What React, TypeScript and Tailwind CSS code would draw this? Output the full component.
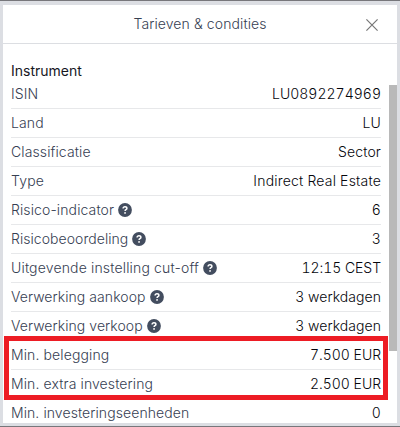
type Item = { label: string; value: string; help?: boolean; labelStyle?: string; valueStyle?: string };

const items: Item[] = [
  { label: 'ISIN', value: 'LU0892274969', valueStyle: 'tracking-[0.02px]' },
  { label: 'Land', value: 'LU' },
  { label: 'Classificatie', value: 'Sector' },
  { label: 'Type', value: 'Indirect Real Estate', labelStyle: 'tracking-[0.2px]', valueStyle: 'tracking-[0.2px]' },
  { label: 'Risico-indicator', value: '6', help: true },
  { label: 'Risicobeoordeling', value: '3', help: true, labelStyle: 'tracking-[0.05px]' },
  { label: 'Uitgevende instelling cut-off', value: '12:15 CEST', help: true, labelStyle: 'tracking-[0.16px]', valueStyle: 'tracking-[-0.04px]' },
  { label: 'Verwerking aankoop', value: '3 werkdagen', help: true, labelStyle: 'tracking-[0.06px]', valueStyle: 'tracking-[0.05px]' },
  { label: 'Verwerking verkoop', value: '3 werkdagen', help: true, labelStyle: 'tracking-[0.06px]', valueStyle: 'tracking-[0.05px]' },
  { label: 'Min. belegging', value: '7.500 EUR', valueStyle: 'tracking-[-0.04px]' },
  { label: 'Min. extra investering', value: '2.500 EUR', valueStyle: 'tracking-[-0.04px]' },
  { label: 'Min. investeringseenheden', value: '0', labelStyle: 'tracking-[0.08px]' },
];

function HelpIcon() {
  return (
    <svg className="ml-1 size-3.5 shrink-0" viewBox="0 0 14 14" fill="none">
      <circle cx="7" cy="7" r="6.9" fill="#434d5f" />
      <path d="M5.1 5.5C5.1 4.3 5.8 3.8 7 3.8s1.9.6 1.9 1.6c0 1.3-1.8 1.3-1.8 2.5" stroke="#fff" strokeWidth="1.5" />
      <circle cx="7.05" cy="9.9" r="0.9" fill="#fff" />
    </svg>
  );
}

function Row({ label, value, help, labelStyle = 'tracking-[0.11px]', valueStyle = 'tracking-[0.13px]' }: Item) {
  return (
    <div className="flex h-[29px] shrink-0 items-center border-b border-[#e7e8ea]">
      <span className={`whitespace-nowrap text-[#364052] ${labelStyle}`}>{label}</span>
      {help && <HelpIcon />}
      <span className={`ml-auto whitespace-nowrap text-[#05060c] tabular-nums ${valueStyle}`}>{value}</span>
    </div>
  );
}

export default function App() {
  return (
    <div className="relative h-[427px] w-[400px] overflow-hidden border-y border-[#77777b] bg-[#dcdee3] px-[3px] pt-1 pb-[3px] font-['Inter',sans-serif] text-[14px] leading-5 font-light">
      <div className="flex h-[418px] w-[394px] flex-col overflow-hidden bg-white">
        <header className="relative flex h-[39px] shrink-0 items-center justify-center border-b border-[#dcdee2] text-[#364052]">
          <h1 className="tracking-[0.1px]">Tarieven &amp; condities</h1>
          <button className="absolute top-[14px] right-[19px]" aria-label="Sluiten">
            <svg className="size-3" viewBox="0 0 12 12" stroke="#777" strokeWidth="1.2">
              <path d="M.4.4 11.6 11.6M11.6.4.4 11.6" />
            </svg>
          </button>
        </header>
        <div className="flex min-h-0 flex-1">
          <main className="ml-2 flex w-[370px] flex-col pt-[17px]">
            <h2 className="h-[19px] shrink-0 font-normal text-[#16171f]">Instrument</h2>
            {items.map((item) => (
              <Row key={item.label} {...item} />
            ))}
          </main>
          <div className="mt-[41px] ml-auto h-[266px] w-2 bg-[#b9b9b9]" />
        </div>
      </div>
      <div className="absolute top-[335px] left-1 h-16 w-96 border-[5px] border-[#ed1c24]" />
    </div>
  );
}
